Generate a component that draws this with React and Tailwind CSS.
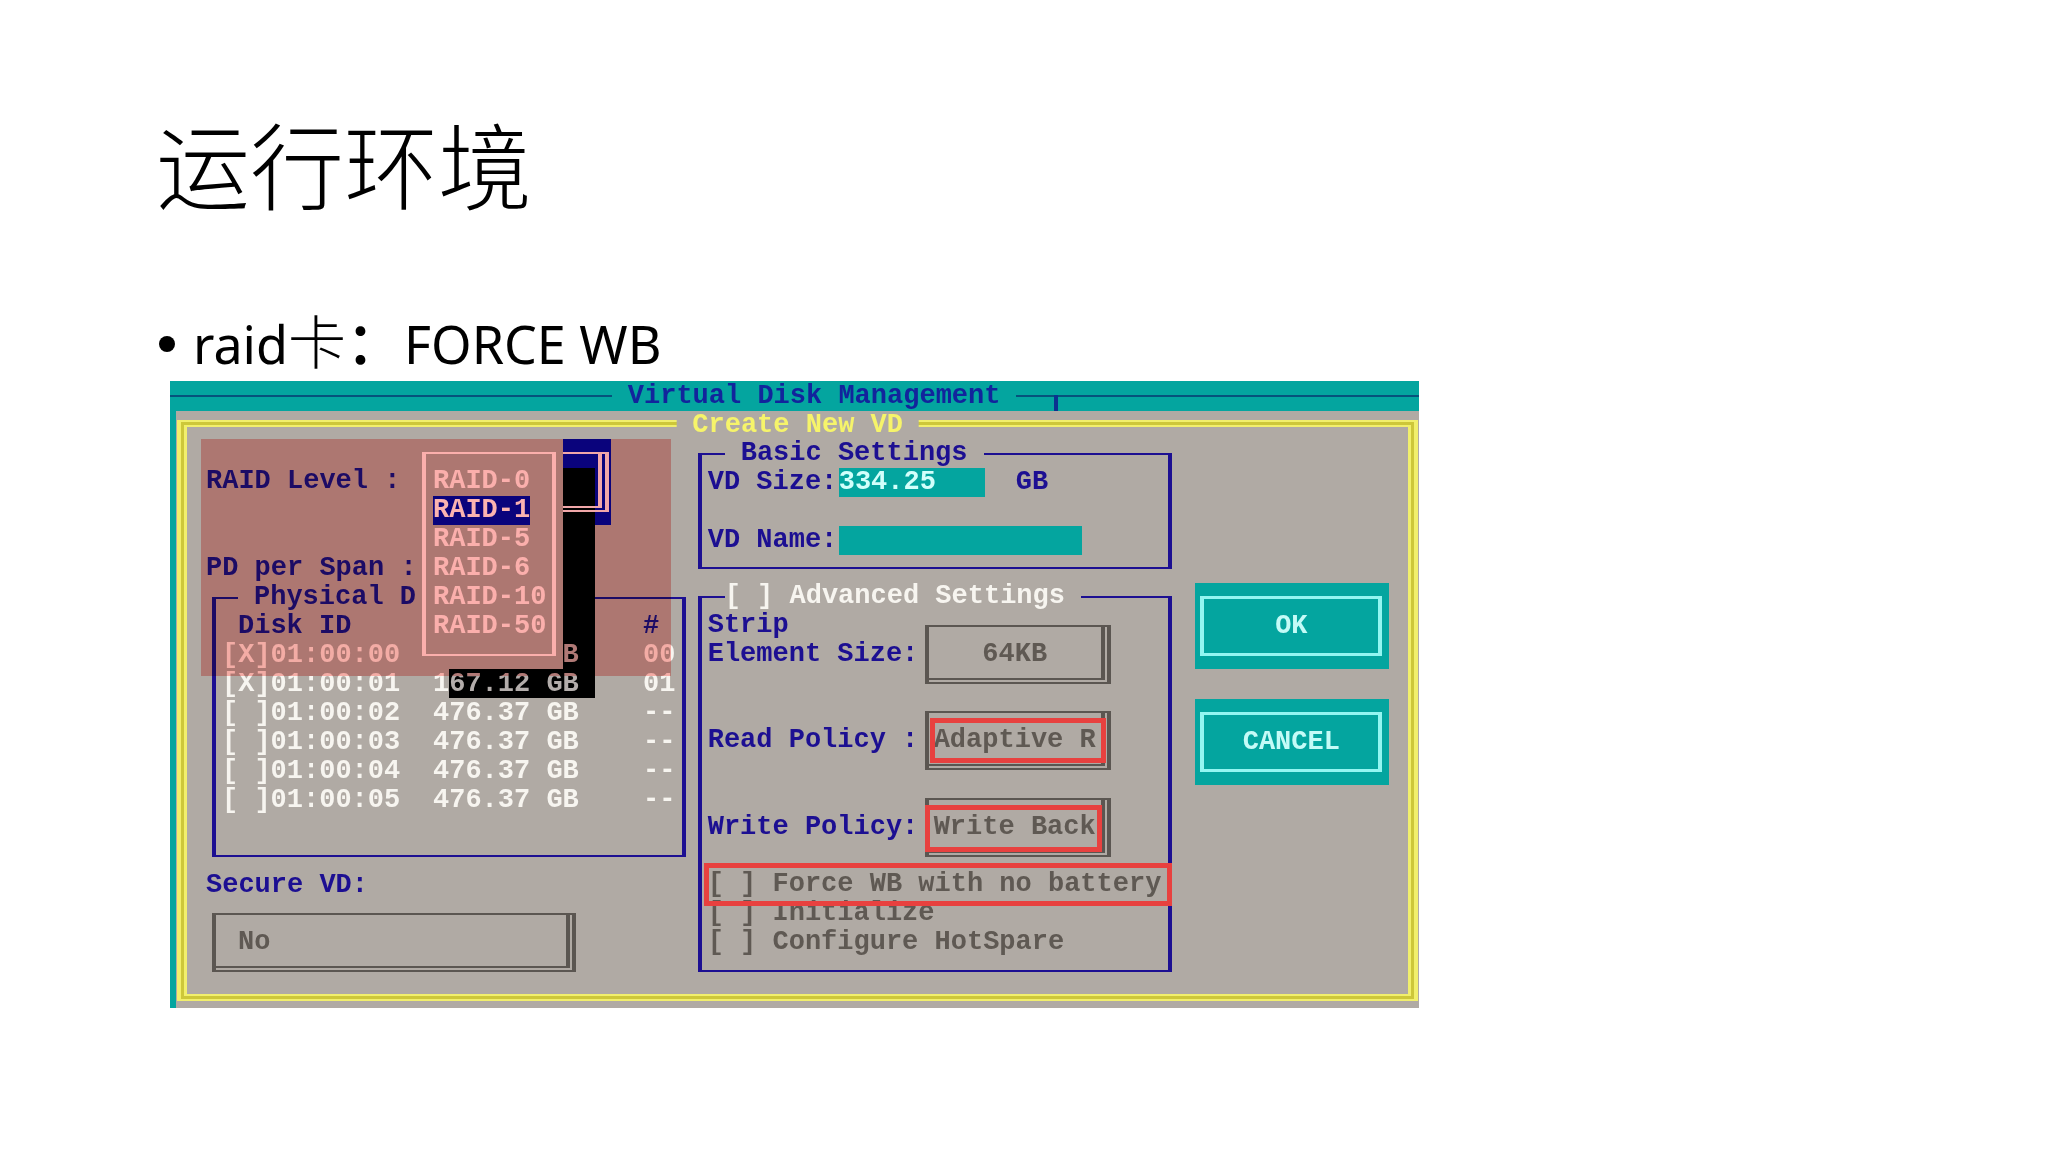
import { useState } from "react";

const raidLevels = ["RAID-0", "RAID-1", "RAID-5", "RAID-6", "RAID-10", "RAID-50"];

const disks = [
  { id: "01:00:00", size: "167.12 GB", slot: "00", checked: true, shaded: 0 },
  { id: "01:00:01", size: "167.12 GB", slot: "01", checked: true, shaded: 1 },
  { id: "01:00:02", size: "476.37 GB", slot: "--" },
  { id: "01:00:03", size: "476.37 GB", slot: "--" },
  { id: "01:00:04", size: "476.37 GB", slot: "--" },
  { id: "01:00:05", size: "476.37 GB", slot: "--" },
];

function Check({ label, hideLabel, defaultChecked = false, className = "" }) {
  const [on, setOn] = useState(defaultChecked);
  return (
    <label className={"relative whitespace-pre " + className}>
      <input
        type="checkbox"
        className="sr-only"
        checked={on}
        aria-label={label}
        onChange={(e) => setOn(e.target.checked)}
      />
      <span>{on ? "[X]" : "[ ]"}</span>
      {!hideLabel && <span>{" " + label}</span>}
    </label>
  );
}

function DosSelect({ id, value, className = "", selectClass = "text-center", children }) {
  return (
    <div className={"relative h-[59px] border-x-4 border-y-2 border-[#5b5651] pr-[2px] pb-[2px] " + className}>
      <select
        id={id}
        defaultValue={value}
        className={
          "block h-full w-full appearance-none rounded-none border-r-4 border-b-2 border-[#5b5651] bg-transparent pt-1 text-[#5f5953] outline-none " +
          selectClass
        }
      >
        <option>{value}</option>
      </select>
      {children}
    </div>
  );
}

function Mark({ className }) {
  return <span className={"pointer-events-none absolute z-20 border-[5px] border-[#e8413f] " + className} />;
}

function DosButton({ children }) {
  return (
    <button type="button" className="block h-[86px] w-full bg-[#04a59f] py-[13px] pr-[7px] pl-[5px]">
      <span className="flex h-full items-center justify-center border-x-4 border-y-[3px] border-[#93f6f1] text-[#c4fbf7]">
        {children}
      </span>
    </button>
  );
}

function RaidMenu() {
  const [level, setLevel] = useState("RAID-1");
  return (
    <>
      <div className="absolute -top-7 left-[209px] h-[86px] w-[196px] bg-[#0a04b4]" />
      <div className="absolute top-[1px] left-[243px] h-[230px] w-[146px] bg-black" />
      <div className="absolute -top-[15px] left-[217px] z-10 h-[60px] w-[186px] border-x-4 border-y-2 border-[#f5eef5] pr-[3px] pb-[2px]">
        <div className="h-full border-r-4 border-b-2 border-[#f5eef5]" />
      </div>
      <div className="absolute -top-7 left-[209px] z-20 h-[230px] w-[148px] bg-[#b0aaa4] px-[7px] py-[13px]">
        <div role="listbox" aria-label="RAID Level" className="h-full border-x-4 border-y-2 border-[#fffafa] py-[13px] pl-[7px]">
          {raidLevels.map((name) => (
            <button
              key={name}
              type="button"
              role="option"
              aria-selected={name === level}
              onClick={() => setLevel(name)}
              className={
                "block h-[29px] leading-[29px] whitespace-nowrap " +
                (name === level ? "bg-[#0a04b4] text-white" : "text-[#fffafa]")
              }
            >
              {name}
            </button>
          ))}
        </div>
      </div>
    </>
  );
}

function DiskTable() {
  return (
    <table className="relative z-10 w-full table-fixed border-collapse text-left text-[#f7f5f0]">
      <thead className="text-[#1c0f92]">
        <tr className="h-[29px]">
          <th className="w-[217px] p-0 pl-[22px]">Disk ID</th>
          <th className="w-[210px] p-0" aria-label="Size" />
          <th className="p-0">#</th>
        </tr>
      </thead>
      <tbody>
        {disks.map((d) => (
          <tr key={d.id} className="h-[29px]">
            <td className="p-0 pl-[6px]">
              <Check label={d.id} hideLabel defaultChecked={d.checked} />
              {d.id}
            </td>
            <td className="p-0">
              {d.size.slice(0, d.shaded ?? 9)}
              <span className="text-[#b3adab]">{d.size.slice(d.shaded ?? 9)}</span>
            </td>
            <td className="p-0">{d.slot}</td>
          </tr>
        ))}
      </tbody>
    </table>
  );
}

const box = "min-w-0 border-x-4 border-y-2 border-[#1c0f92]";

function Console() {
  return (
    <section className="isolate w-[61vw] min-w-[1240px] bg-[#04a59f] font-['Liberation_Mono',monospace] text-[27px] leading-[29px] font-bold text-[#1c0f92]">
      <header className="relative flex h-[30px] items-center">
        <span className="h-[2px] grow-[442] basis-0 bg-[#06527c]" />
        <h2 className="px-4 text-[#12249c]">Virtual Disk Management</h2>
        <span className="flex h-[2px] grow-[365] basis-0 bg-[#06527c] pl-[38px]">
          <span className="h-[16px] w-1 bg-[#0b3290]" />
        </span>
      </header>

      <div className="ml-[6px] bg-[#b0aaa4] pt-[9px] pr-[1px] pb-[7px] pl-[1px]">
        <div className="relative border-x-4 border-y-2 border-[#f1ef6c] bg-[#cdc73a] px-[3px] py-[3px]">
          <h3 className="absolute -top-[11px] left-1/2 z-10 -translate-x-1/2 bg-[#b0aaa4] px-4 whitespace-nowrap text-[#f6f46a]">
            Create New VD
          </h3>
          <div className="relative grid grid-cols-[480fr_475fr_205fr] gap-x-3 border-x-[3px] border-y-2 border-[#f1ef6c] bg-[#b0aaa4] px-[19px] pb-[22px]">
            <div className="pt-[40px]">
              <div className="relative">
                <p>RAID Level :</p>
                <RaidMenu />
              </div>
              <p className="mt-[58px]">PD per Span :</p>
              <fieldset className={box + " ml-[6px] pb-[40px]"}>
                <legend className="ml-[22px] px-4">Physical D</legend>
                <DiskTable />
              </fieldset>
              <label htmlFor="secure" className="mt-[14px] block">
                Secure VD:
              </label>
              <DosSelect id="secure" value="No" className="mt-[13px] ml-[6px] w-[364px]" selectClass="pl-[22px]" />
            </div>

            <div className="pt-[12px]">
              <fieldset className={box + " pb-[12px] pl-[6px]"}>
                <legend className="ml-[17px] px-4">Basic Settings</legend>
                <div className="flex">
                  <label htmlFor="size" className="w-[131px]">VD Size:</label>
                  <input
                    id="size"
                    defaultValue="334.25"
                    className="mr-[31px] h-[29px] w-[146px] bg-[#04a59f] text-[#d2fffb] outline-none"
                  />
                  <span>GB</span>
                </div>
                <div className="mt-[29px] flex">
                  <label htmlFor="name" className="w-[131px]">VD Name:</label>
                  <input id="name" className="h-[29px] w-[243px] bg-[#04a59f] text-[#d2fffb] outline-none" />
                </div>
              </fieldset>

              <fieldset className={box + " mt-[13px] pb-[13px] pl-[6px]"}>
                <legend className="ml-[17px] pr-4 text-[#f7f5f0]">
                  <Check label="Advanced Settings" />
                </legend>
                <div className="flex h-[73px]">
                  <label htmlFor="strip" className="w-[217px]">
                    Strip
                    <br />
                    Element Size:
                  </label>
                  <DosSelect id="strip" value="64KB" className="w-[186px] self-end" />
                </div>
                <div className="mt-[27px] flex items-center">
                  <label htmlFor="read" className="w-[217px]">Read Policy :</label>
                  <DosSelect id="read" value="Adaptive R" className="w-[186px]">
                    <Mark className="inset-x-[1px] inset-y-[5px]" />
                  </DosSelect>
                </div>
                <div className="mt-[28px] flex items-center">
                  <label htmlFor="write" className="w-[217px]">Write Policy:</label>
                  <DosSelect id="write" value="Write Back" className="w-[186px]">
                    <Mark className="top-[5px] right-[5px] bottom-[3px] -left-1" />
                  </DosSelect>
                </div>
                <div className="mt-[13px] flex flex-col text-[#5f5953]">
                  <div className="relative">
                    <Check label="Force WB with no battery" />
                    <Mark className="-inset-x-1 -inset-y-[7px]" />
                  </div>
                  <Check label="Initialize" />
                  <Check label="Configure HotSpare" />
                </div>
              </fieldset>
            </div>

            <div className="flex flex-col gap-[30px] pt-[156px] pl-[11px]">
              <DosButton>OK</DosButton>
              <DosButton>CANCEL</DosButton>
            </div>

            <div className="pointer-events-none absolute top-[12px] left-[14px] z-30 h-[237px] w-[470px] bg-[#fbb3b0] mix-blend-multiply" />
          </div>
        </div>
      </div>
    </section>
  );
}

export default function App() {
  return (
    <main className="min-h-screen bg-white pt-[115px] pl-[156px] text-black">
      <h1 className="font-['Noto_Sans_CJK_SC',sans-serif] text-[94px] leading-[94px] font-light">运行环境</h1>
      <ul className="mt-[100px] mb-[3px] font-['Noto_Sans','Noto_Sans_CJK_SC',sans-serif] text-[52px] leading-[69px]">
        <li className="flex h-[69px] items-center pl-[3px]">
          <span className="mr-[18px] size-4 rounded-full bg-black" />
          <span>
            raid<span className="font-['Noto_Sans_CJK_SC',sans-serif] text-[58px] leading-none font-light">卡</span>
            <span className="font-['Noto_Sans_CJK_SC',sans-serif] text-[58px] leading-none font-medium">：</span>FORCE WB
          </span>
        </li>
      </ul>
      <div className="pl-[14px]">
        <Console />
      </div>
    </main>
  );
}
